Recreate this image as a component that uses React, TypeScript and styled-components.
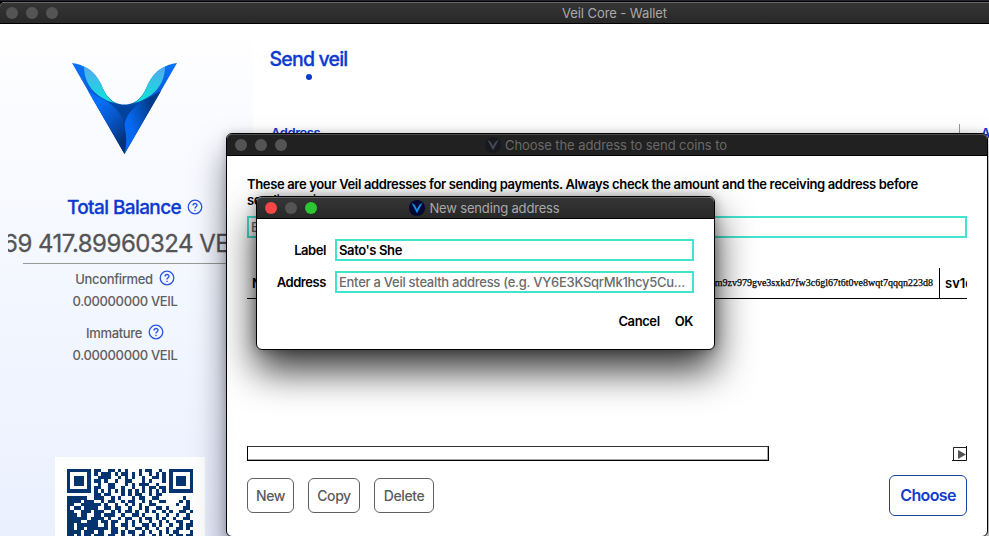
import React from 'react';
import styled, { createGlobalStyle } from 'styled-components';

const GlobalStyle = createGlobalStyle`
  * { box-sizing: border-box; }
  html, body { margin: 0; overflow: hidden; }
  body { font-family: Inter, "Liberation Sans", sans-serif; background: #1d1d22; }
`;

const Desktop = styled.div`
  position: relative;
  width: 989px;
  height: 536px;
  overflow: hidden;
  padding-top: 2px;
  background: linear-gradient(#22222a 0 1px, #050507 1px);
`;

const TitleBar = styled.header<{ $tone: 'main' | 'back' | 'front' }>`
  display: grid;
  grid-template-columns: 1fr auto 1fr;
  align-items: center;
  height: 22px;
  padding-left: ${p => (p.$tone === 'main' ? 6 : 8)}px;
  flex: none;
  border-top: 1px solid ${p => (p.$tone === 'back' ? '#4b4b4b' : '#666')};
  border-bottom: 1px solid #000;
  background: ${p => (p.$tone === 'back' ? '#212121' : 'linear-gradient(#353535, #282828)')};
  color: ${p => (p.$tone === 'back' ? '#696969' : '#a9a9a9')};
`;

const Lights = styled.div`
  display: flex;
  gap: 8px;
`;

const Light = styled.i<{ $color?: string }>`
  width: 12px;
  height: 12px;
  border-radius: 50%;
  background: ${p => p.$color ?? '#545454'};
`;

const WindowTitle = styled.h1<{ $shift: number; $tracking: number }>`
  display: flex;
  align-items: center;
  gap: 4px;
  margin: 0 ${p => -p.$shift}px 0 ${p => p.$shift}px;
  font-size: 13px;
  line-height: 20px;
  font-weight: 400;
  letter-spacing: ${p => p.$tracking}px;
  white-space: pre;
`;

const WalletWindow = styled.main`
  display: flex;
  flex-direction: column;
  height: 534px;
  border-radius: 5px 0 0 0;
  overflow: hidden;
  background: #fff;
`;

const WalletBody = styled.div`
  display: flex;
  flex: 1;
  min-height: 0;
`;

const Sidebar = styled.aside`
  display: flex;
  flex-direction: column;
  align-items: center;
  width: 253px;
  flex: none;
  overflow: hidden;
  background: linear-gradient(#fff 0, #fafbff 100px, #f2f6ff 300px, #eaf0fe 100%);
`;

const Logo = styled.svg`
  width: 105px;
  height: 91px;
  margin: 39px 4px 0 0;
  flex: none;
`;

const BalanceHeading = styled.h2`
  display: flex;
  align-items: center;
  gap: 6px;
  margin: 41px 0 0 17px;
  flex: none;
  font-size: 19px;
  line-height: 26px;
  font-weight: 500;
  letter-spacing: -0.6px;
  color: #0b3bd0;
  -webkit-text-stroke: 0.3px #0b3bd0;
`;

const HelpIcon = styled.svg`
  width: 16px;
  height: 16px;
  margin-top: -2px;
  fill: none;
  stroke: #2b55e0;
`;

const BalanceClip = styled.div`
  align-self: stretch;
  flex: none;
  margin: 7px 0 0 8px;
  overflow: hidden;
`;

const BalanceValue = styled.div`
  margin-left: -5px;
  font-size: 24px;
  line-height: 32px;
  letter-spacing: -0.5px;
  white-space: nowrap;
  color: #555;
  -webkit-text-stroke: 0.3px #555;
`;

const BalanceRule = styled.hr`
  align-self: stretch;
  height: 1px;
  margin: 3px 0 0 23px;
  border: 0;
  flex: none;
  background: #999;
`;

const Stat = styled.div<{ $top: number }>`
  display: flex;
  flex-direction: column;
  align-items: center;
  width: 250px;
  margin: ${p => p.$top}px 3px 0 0;
  flex: none;
  font-size: 13px;
  line-height: 22px;
  font-weight: 500;
  letter-spacing: -0.34px;
  color: #606060;
`;

const StatLabel = styled.div`
  display: flex;
  align-items: center;
  gap: 6px;
`;

const QrCard = styled.div`
  width: 150px;
  height: 150px;
  margin: 91px 0 0 7px;
  padding: 12px;
  flex: none;
  background: #fff;
`;

const QrSvg = styled.svg`
  display: block;
  width: 126px;
  height: 126px;
  fill: #053470;
`;

const SendPane = styled.section`
  flex: 1;
  padding: 22px 0 0 17px;
`;

const Tab = styled.div`
  display: flex;
  flex-direction: column;
  align-items: center;
  width: 77px;
  font-size: 19.5px;
  line-height: 26px;
  font-weight: 500;
  letter-spacing: -0.8px;
  white-space: nowrap;
  color: #0b3bd0;
  -webkit-text-stroke: 0.3px #0b3bd0;
`;

const TabDot = styled.i`
  width: 6px;
  height: 6px;
  margin-top: 2px;
  border-radius: 50%;
  background: #0b3bd0;
`;

const SendHeader = styled.div`
  display: flex;
  justify-content: space-between;
  width: 730px;
  margin: 44px 0 0 1px;
  font-size: 13px;
  line-height: 18px;
  font-weight: 600;
  letter-spacing: -0.45px;
  color: #0b3bd0;
`;

const SendAmount = styled.div`
  width: 42px;
  height: 60px;
  padding-left: 21px;
  border-left: 1px solid #999;
  overflow: hidden;
`;

const Dialog = styled.section<{ $x: number; $y: number; $w: number; $h: number; $front?: boolean }>`
  position: absolute;
  left: ${p => p.$x}px;
  top: ${p => p.$y}px;
  width: ${p => p.$w}px;
  height: ${p => p.$h}px;
  display: flex;
  flex-direction: column;
  border: 1px solid #000;
  border-radius: 6px;
  background: #fff;
  box-shadow: ${p => (p.$front
    ? '0 20px 38px rgba(0,0,0,.8), 0 0 12px rgba(0,0,0,.3)'
    : '0 20px 32px rgba(10,10,30,.5), 0 0 8px rgba(0,0,0,.18)')};
  > header { border-radius: 5px 5px 0 0; }
`;

const ChooseBody = styled.div`
  display: flex;
  flex-direction: column;
  padding: 20px 20px 0;
`;

const Notice = styled.p`
  margin: 0;
  font-size: 13px;
  line-height: 16px;
  font-weight: 600;
  letter-spacing: -0.347px;
  color: #000;
  white-space: pre;
`;

const Field = styled.div<{ $muted?: boolean }>`
  height: 22px;
  padding-left: 2px;
  border: 2px solid #42e4cf;
  background: #fff;
  font-size: 13px;
  line-height: 18px;
  font-weight: ${p => (p.$muted ? 500 : 600)};
  letter-spacing: ${p => (p.$muted ? -0.268 : -0.375)}px;
  color: ${p => (p.$muted ? '#6b6b6b' : '#000')};
  white-space: nowrap;
  overflow: hidden;
`;

const SearchField = styled(Field)`
  margin-top: 8px;
`;

const TableRow = styled.div`
  display: flex;
  height: 31px;
  margin-top: 30px;
  border-bottom: 1px solid #000;
  font-size: 13px;
  line-height: 30px;
  font-weight: 600;
  color: #000;
  overflow: hidden;
`;

const NameCell = styled.div`
  width: 62px;
  padding-left: 5px;
`;

const HashCell = styled.div`
  flex: 1;
  padding-right: 6px;
  text-align: right;
  font: 400 10px/30px "Liberation Serif", serif;
  -webkit-text-stroke: 0.25px #000;
`;

const TypeCell = styled.div`
  width: 28px;
  padding-left: 5px;
  border-left: 1px solid #000;
  overflow: hidden;
`;

const ScrollRow = styled.div`
  display: flex;
  justify-content: space-between;
  margin-top: 147px;
`;

const ScrollThumb = styled.div`
  width: 522px;
  height: 15px;
  border: 1px solid #000;
  border-top-color: #333;
  box-shadow: inset -1px -1px #aaa;
`;

const ScrollArrow = styled.svg`
  width: 15px;
  height: 15px;
`;

const Actions = styled.div`
  display: flex;
  align-items: center;
  gap: 14px;
  height: 42px;
  margin-top: 13px;
`;

const Button = styled.button<{ $w: number; $primary?: boolean }>`
  width: ${p => p.$w}px;
  height: ${p => (p.$primary ? 41 : 35)}px;
  margin: 0 0 0 ${p => (p.$primary ? 'auto' : '0')};
  padding: 0;
  border: 1px solid ${p => (p.$primary ? '#1a449e' : '#606060')};
  border-radius: 6px;
  background: #fff;
  color: ${p => (p.$primary ? '#123bd0' : '#5b5b5b')};
  font: ${p => (p.$primary ? '600 16px' : '500 14px')} Inter, sans-serif;
  letter-spacing: ${p => (p.$primary ? -0.65 : -0.4)}px;
`;

const Form = styled.div`
  display: grid;
  grid-template-columns: 69px 359px;
  column-gap: 9px;
  row-gap: 10px;
  margin-top: 20px;
`;

const FormLabel = styled.label`
  font-size: 13px;
  line-height: 22px;
  font-weight: 600;
  letter-spacing: -0.43px;
  text-align: right;
  color: #000;
`;

const FormActions = styled.div`
  display: flex;
  justify-content: flex-end;
  gap: 15px;
  margin: 18px 21px 0 0;
`;

const TextButton = styled.button`
  padding: 0;
  border: 0;
  background: none;
  font: 600 13px/20px Inter, sans-serif;
  letter-spacing: -0.4px;
  color: #000;
`;

const BadgeSvg = styled.svg`
  width: 16px;
  height: 16px;
`;

function Help() {
  return (
    <HelpIcon viewBox="0 0 16 16">
      <circle cx="8" cy="8" r="6.8" strokeWidth="1.3" />
      <path d="M6.1 6.4C6.1 3.9 10 3.9 10 6.3C10 7.7 8 7.8 8 9.4" strokeWidth="1.4" />
      <circle cx="8" cy="11.4" r="0.5" strokeWidth="0.8" />
    </HelpIcon>
  );
}

function VeilLogo() {
  return (
    <Logo viewBox="0 0 105 91">
      <defs>
        <linearGradient id="body" x1="0" y1="0" x2="0" y2="1">
          <stop offset="0" stopColor="#0874fa" />
          <stop offset=".3" stopColor="#075ede" />
          <stop offset=".5" stopColor="#02439c" />
        </linearGradient>
        <linearGradient id="cyan" x1="0" y1="0" x2="0" y2="1">
          <stop offset="0" stopColor="#55a9f2" />
          <stop offset=".85" stopColor="#13dfd9" />
        </linearGradient>
        <linearGradient id="left" x1="0" y1="0" x2=".65" y2="1">
          <stop offset=".25" stopColor="#0670fa" />
          <stop offset=".6" stopColor="#0756c8" />
          <stop offset="1" stopColor="#033078" />
        </linearGradient>
        <linearGradient id="right" x1="0" y1=".6" x2=".8" y2=".2">
          <stop offset=".2" stopColor="#0669f2" />
          <stop offset=".9" stopColor="#033b8b" />
        </linearGradient>
      </defs>
      <path fill="url(#body)" d="M0 0C12 1 23 9 29 21C33 31 39 41.5 52.5 41.5S72 31 76 21C82 9 93 1 105 0L52.5 91Z" />
      <path fill="url(#cyan)" d="M12 3.5C21 7 26 15 29 21C33 31 38 41 50 41.5C30 39 12 26 12 3.5Z" />
      <path fill="url(#cyan)" d="M93 3.5C84 7 79 15 76 21C72 31 67 41 55 41.5C75 39 93 26 93 3.5Z" />
      <path fill="url(#right)" d="M89 28C80 33 75 36 70 38.5C60 45 53 54 52.5 63Q54 74 52.5 91Z" />
      <path fill="url(#left)" d="M16 28C25 33 30 36 35 38.5C45 45 52 54 52.5 63Q56 77 52.5 91Z" />
    </Logo>
  );
}

function Badge({ dim }: { dim?: boolean }) {
  return (
    <BadgeSvg viewBox="0 0 16 16">
      <circle cx="8" cy="8" r="8" fill={dim ? '#181920' : '#03082f'} />
      <path d="M3.8 4.2Q6 5 8 11Q10 5 12.2 4.2L8 12Z" fill="none" stroke={dim ? '#454a52' : '#168be9'} strokeWidth="1.2" />
    </BadgeSvg>
  );
}

// Rows of the receive code, one character per module.
const QR_ROWS = [
  '#######.##..##.#.#...#.##..#..#######',
  '#.....#.#.###.#.##.#.#..#.#.#.#.....#',
  '#.###.#..####..#.#.#..#..##.#.#.###.#',
  '#.###.#.##.#..#..##...#.#...#.#.###.#',
  '#.###.#..#..##...#.#.###..#...#.###.#',
  '#.....#.##..##..#..#..#.##.##.#.....#',
  '#######.#.#.#.#.#.#.#.#.#.#.#.#######',
  '........##.##...#.#.##..#.##.........',
  '######..###..#.#...#.##..##.......#..',
  '####.###..#.##..#.##..#.#..##....#.#.',
  '##..######.#..#..#.#.#..##......#..#.',
  '#.##.####..##.##..#..#.#..##.#....##.',
  '##..###.###..#.#.##.#..#.#..#.#..##.#',
  '###.##..##.###..#..##.#...#..#..#..#.',
  '######.####.#..#.##..#.##.#.#..#..##.',
  '####..###.##.##..#.#.#..#..#.#..##..#',
  '##.######..#.#..##.#..##.#.#..#..#.##',
  '##.##.######.##..#..##.#..#..#..##.#.',
  '####.###.##..##.#.##..#.#..#.#.##...#',
  '##.#.##.###.##..#..#.##..#.#..#.##.##',
  '###.##.##..##.#..#.##..#.#..#.#..#.#.',
];

function QrCode() {
  return (
    <QrSvg viewBox="0 0 37 37" shapeRendering="crispEdges">
      {QR_ROWS.flatMap((row, y) =>
        [...row].map((c, x) => (c === '#' ? <rect key={`${x}-${y}`} x={x} y={y} width="1" height="1" /> : null)),
      )}
    </QrSvg>
  );
}

export default function App() {
  return (
    <>
      <GlobalStyle />
      <Desktop>
        <WalletWindow>
          <TitleBar $tone="main">
            <Lights><Light /><Light /><Light /></Lights>
            <WindowTitle $shift={117} $tracking={-0.07}>Veil Core - Wallet</WindowTitle>
          </TitleBar>
          <WalletBody>
            <Sidebar>
              <VeilLogo />
              <BalanceHeading>Total Balance <Help /></BalanceHeading>
              <BalanceClip><BalanceValue>69 417.89960324 VEIL</BalanceValue></BalanceClip>
              <BalanceRule />
              <Stat $top={4}>
                <StatLabel>Unconfirmed <Help /></StatLabel>
                <span>0.00000000 VEIL</span>
              </Stat>
              <Stat $top={10}>
                <StatLabel>Immature <Help /></StatLabel>
                <span>0.00000000 VEIL</span>
              </Stat>
              <QrCard><QrCode /></QrCard>
            </Sidebar>
            <SendPane>
              <Tab>Send veil<TabDot /></Tab>
              <SendHeader>
                <span>Address</span>
                <SendAmount>Amount</SendAmount>
              </SendHeader>
            </SendPane>
          </WalletBody>
        </WalletWindow>

        <Dialog $x={226} $y={133} $w={762} $h={404}>
          <TitleBar $tone="back">
            <Lights><Light /><Light /><Light /></Lights>
            <WindowTitle $shift={-5} $tracking={-0.077}><Badge dim />Choose the address to send coins to</WindowTitle>
          </TitleBar>
          <ChooseBody>
            <Notice>{'These are your Veil addresses for sending payments. Always check the amount and the receiving address before\nsending coins.'}</Notice>
            <SearchField $muted>Enter address or label to search</SearchField>
            <TableRow>
              <NameCell>NO</NameCell>
              <HashCell>m9zv979gve3sxkd7fw3c6gl67t6t0ve8wqt7qqqn223d8</HashCell>
              <TypeCell>sv1q</TypeCell>
            </TableRow>
            <ScrollRow>
              <ScrollThumb />
              <ScrollArrow viewBox="0 0 15 15">
                <path d="M1.5 14V1.5H14" fill="none" stroke="#222" />
                <path d="M0 14.5H14.5V0" fill="none" stroke="#111" />
                <path d="M6 4L14 8.5L6 13Z" fill="#555" />
              </ScrollArrow>
            </ScrollRow>
            <Actions>
              <Button $w={47}>New</Button>
              <Button $w={52}>Copy</Button>
              <Button $w={60}>Delete</Button>
              <Button $w={78} $primary>Choose</Button>
            </Actions>
          </ChooseBody>
        </Dialog>

        <Dialog $x={256} $y={196} $w={459} $h={154} $front>
          <TitleBar $tone="front">
            <Lights><Light $color="#fc4644" /><Light /><Light $color="#2ac833" /></Lights>
            <WindowTitle $shift={-5} $tracking={-0.167}><Badge />New sending address</WindowTitle>
          </TitleBar>
          <Form>
            <FormLabel>Label</FormLabel>
            <Field>Sato's She</Field>
            <FormLabel>Address</FormLabel>
            <Field $muted>Enter a Veil stealth address (e.g. VY6E3KSqrMk1hcy5Cu...</Field>
          </Form>
          <FormActions>
            <TextButton>Cancel</TextButton>
            <TextButton>OK</TextButton>
          </FormActions>
        </Dialog>
      </Desktop>
    </>
  );
}
